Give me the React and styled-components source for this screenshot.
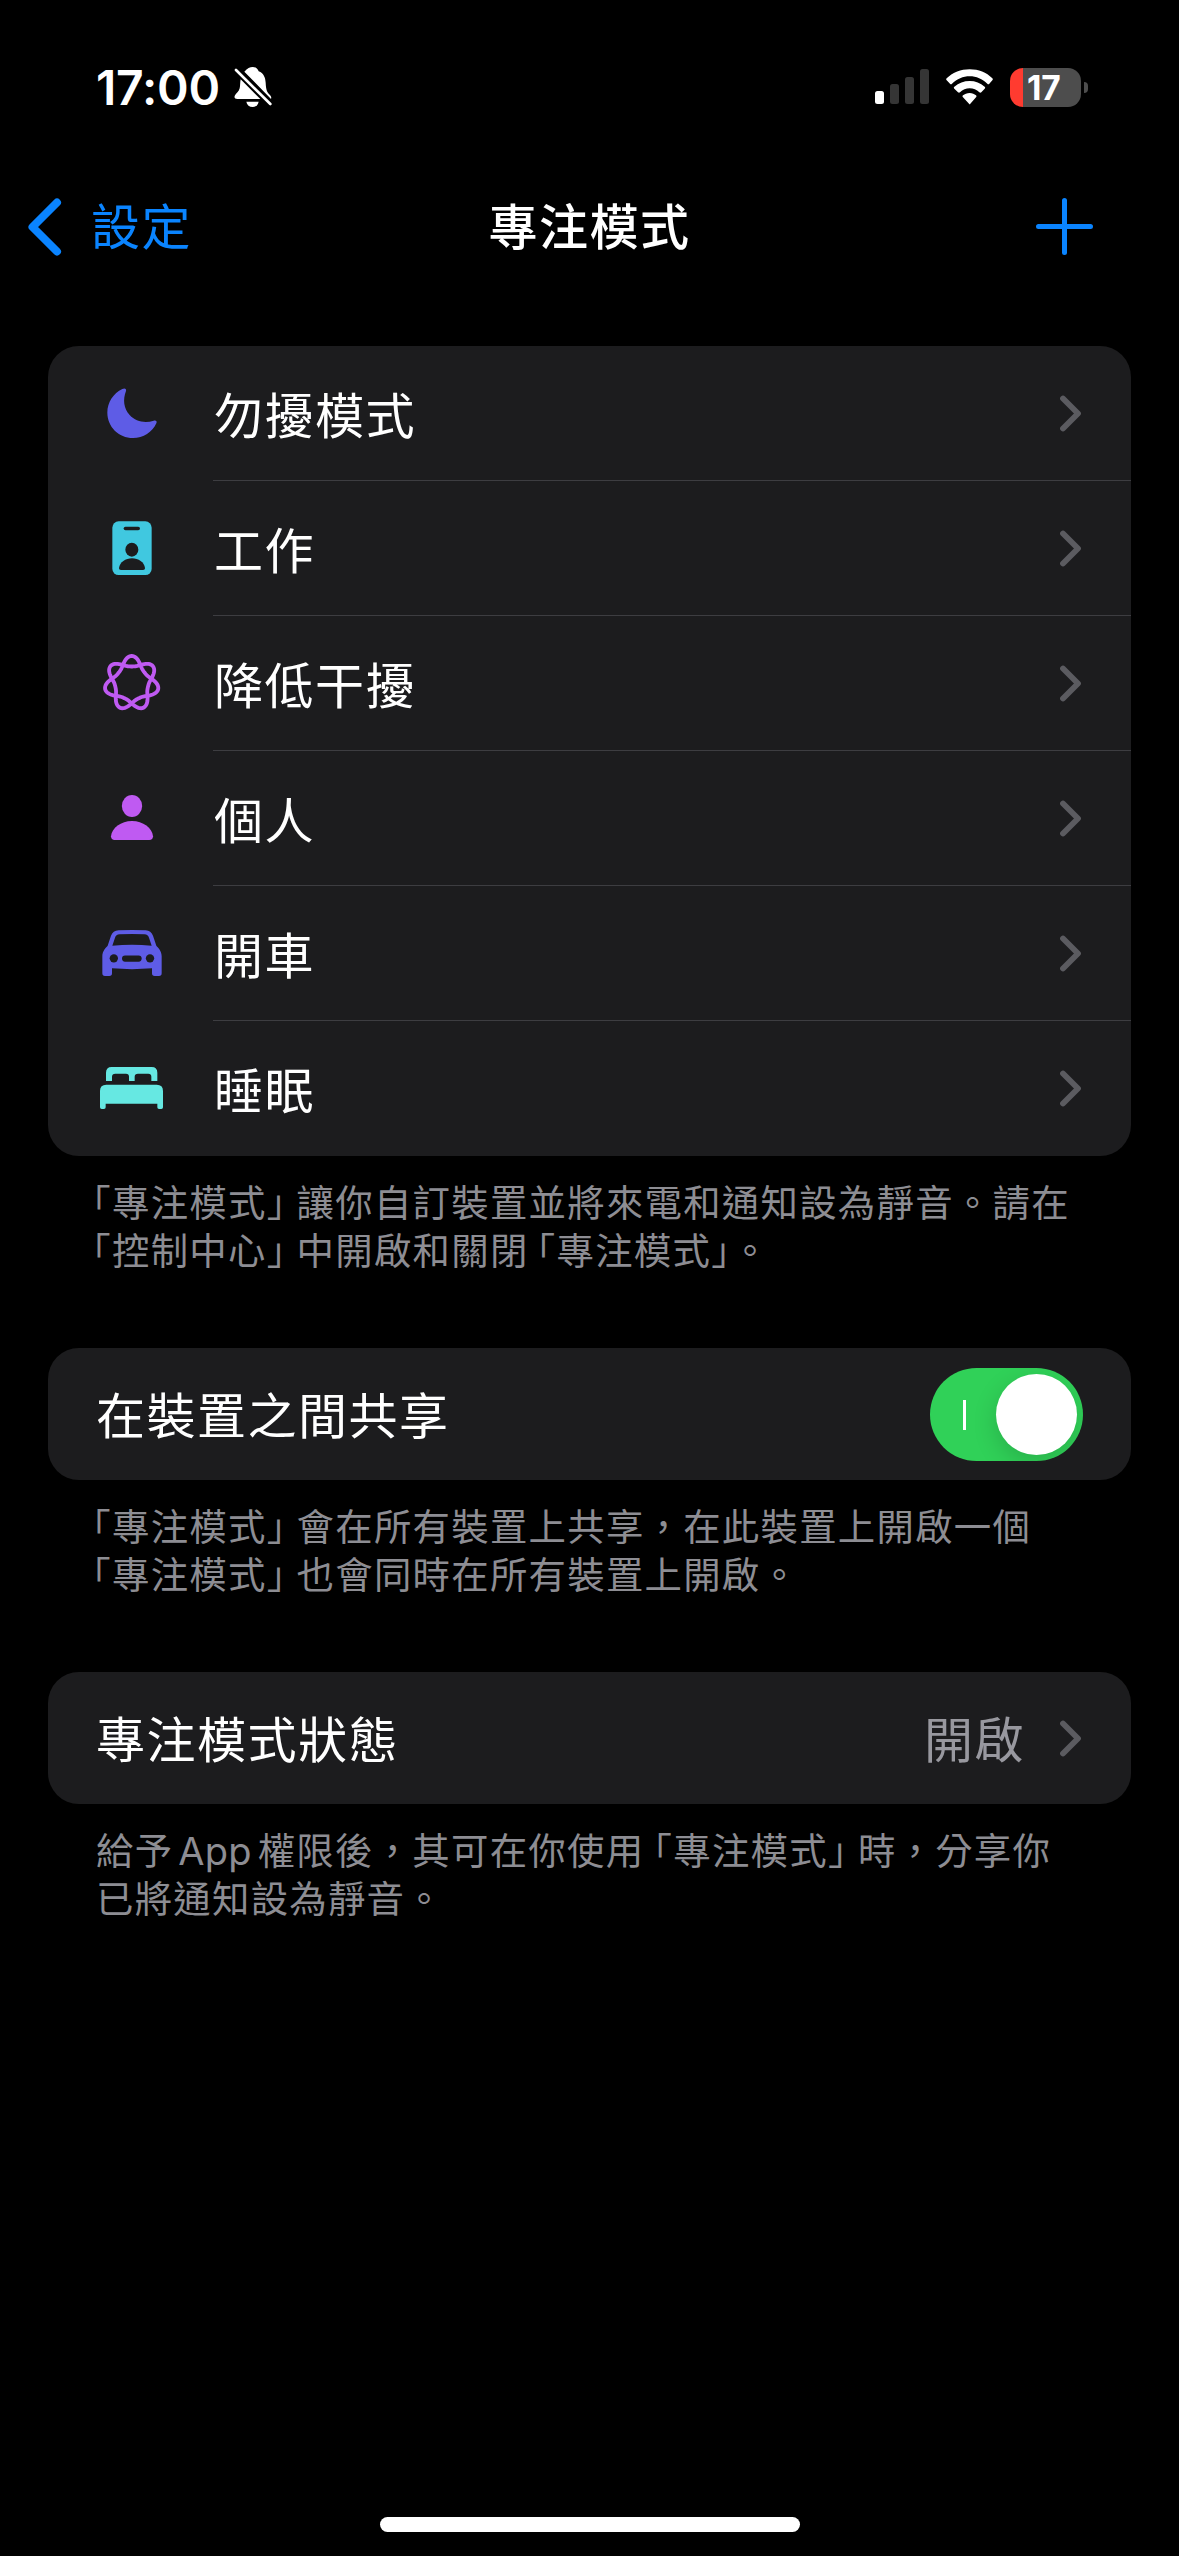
import React from "react";
import styled, { createGlobalStyle } from "styled-components";

const GlobalStyle = createGlobalStyle`
  * {
    box-sizing: border-box;
  }

  body {
    margin: 0;
    background: #000;
    font-family: Inter, "Noto Sans CJK TC", sans-serif;
    color: #fff;
  }
`

const Screen = styled.div`
  width: 1179px;
  height: 2556px;
  background: #000;
  display: flex;
  flex-direction: column;
  overflow: hidden;
`

const StatusBar = styled.header`
  height: 174px;
  padding: 0 91px 0 96px;
  display: flex;
  align-items: center;
  justify-content: space-between;
`

const StatusGroup = styled.div`
  display: flex;
  align-items: center;
`

const Clock = styled.span`
  width: 138px;
  padding-top: 2px;
  font-size: 48px;
  line-height: 60px;
  font-weight: 600;
  letter-spacing: -0.2px;
  white-space: nowrap;
`

const NavBar = styled.nav`
  height: 105px;
  padding: 0 86px 0 28px;
  display: grid;
  grid-template-columns: 1fr auto 1fr;
  align-items: center;
`

const BackButton = styled.div`
  margin-right: auto;
  display: flex;
  align-items: center;
  gap: 29px;
  color: #0a84ff;
`

const Label = styled.span`
  font-family: "Noto Sans CJK TC", sans-serif;
  font-size: 49px;
  line-height: 60px;
  letter-spacing: 1.5px;
  font-weight: ${(props) => props.$weight || 400};
  color: ${(props) => props.$color || "inherit"};
  padding-bottom: ${(props) => props.$lift || 0}px;
  white-space: nowrap;
`

const NavTitle = styled(Label)`
  margin-left: 58px;
`

const AddIcon = styled.svg`
  width: 57px;
  height: 57px;
  margin-left: auto;
`

const Content = styled.main`
  flex: 1;
  padding: 67px 48px 0;
`

const Card = styled.section`
  background: #1c1c1e;
  border-radius: 31px;
  overflow: hidden;
`

const ModeRow = styled.div`
  height: 135px;
  padding-left: 42px;
  display: grid;
  grid-template-columns: 123px 1fr;
  align-items: stretch;
`

const ModeIcon = styled.svg`
  width: 84px;
  height: 84px;
  margin-top: 25px;
  color: ${(props) => props.$color};
`

const ModeBody = styled.div`
  display: flex;
  align-items: center;
  justify-content: space-between;
  padding: 0 49px 0 1px;
  border-bottom: 1px solid #3d3d41;

  ${ModeRow}:last-child & {
    border-color: transparent;
  }
`

const SettingRow = styled.div`
  height: 132px;
  padding: 0 48px;
  display: flex;
  align-items: center;
  justify-content: space-between;
`

const RowValue = styled.div`
  display: flex;
  align-items: center;
  gap: 35px;
  margin-right: 1px;
  color: #98989f;
`

const ChevronIcon = styled.svg`
  width: 22px;
  height: 37px;
  display: block;
`

const Switch = styled.div`
  width: 153px;
  height: 93px;
  padding: 0 6px 0 33px;
  border-radius: 47px;
  background: #30d158;
  overflow: hidden;
  display: flex;
  align-items: center;
  justify-content: space-between;
`

const SwitchMark = styled.span`
  width: 3px;
  height: 30px;
  margin-top: 2px;
  background: #fff;
`

const SwitchKnob = styled.span`
  width: 81px;
  height: 81px;
  border-radius: 50%;
  background: #fff;
  box-shadow: 0 8px 24px rgba(0, 0, 0, 0.16);
`

const Footnote = styled.div`
  height: 192px;
  padding: 21px 47px 0 48px;
  color: #8d8d93;
  font-family: "Noto Sans CJK TC", sans-serif;
  font-size: 37.4px;
  letter-spacing: 1.27px;
`

const FootLine = styled.p`
  margin: 0 0 0 ${(props) => (props.$hang ? "-4px" : "0")};
  height: 48px;
  line-height: 48px;
  white-space: nowrap;
`

// half-width corner brackets
const Bracket = styled.span`
  font-feature-settings: "halt";
  margin-left: ${(props) => props.$before || 0}px;
  margin-right: ${(props) => props.$after || 0}px;
`

const Latin = styled.span`
  font-family: Inter, sans-serif;
  font-size: 38px;
  letter-spacing: 0.2px;
  margin: 0 6px 0 5px;
`

const HomeIndicator = styled.div`
  width: 420px;
  height: 15px;
  margin: 0 auto 24px;
  border-radius: 8px;
  background: #fff;
`

function BellOff() {
  return (
    <svg width="38" height="42" viewBox="700 82 114 126" fill="#fff">
      <path d="M731 99C740 89 748 85 756 85c9 0 15 5 18 13 15 6 20 18 21 34 1 22 4 28 12 36 4 4 6 8 4 13z" />
      <path d="M720 122c-2 9-1 19-3 27-2 10-11 15-14 21-4 7 0 11 7 11h69z" />
      <path d="M737 189h37c-2 10-9 16-18 16-10 0-17-6-19-16z" />
      <path d="M706 94 810 197" stroke="#000" strokeWidth="17" />
      <path d="M706 94 809 196" stroke="#fff" strokeWidth="8" strokeLinecap="round" />
    </svg>
  )
}

function Signal() {
  return (
    <svg width="54" height="36" viewBox="0 0 54 36" fill="#353535">
      <rect x="0" y="22" width="9" height="13" rx="2.5" fill="#fff" />
      <rect x="15" y="15" width="9" height="20" rx="2.5" />
      <rect x="30" y="8" width="9" height="27" rx="2.5" />
      <rect x="45" y="0" width="9" height="35" rx="2.5" />
    </svg>
  )
}

const WifiIcon = styled.svg`
  margin: 0 17px;
`

function Wifi() {
  return (
    <WifiIcon width="47" height="36" viewBox="438 89 141 108" fill="#fff">
      <path d="M509 90c27 0 50 9 68 27 2 2 2 4 0 6l-9 10c-2 2-4 2-6 0-15-14-33-22-53-22s-38 8-53 22c-2 2-4 2-6 0l-10-10c-2-2-2-4 0-6 19-18 42-27 69-27z" />
      <path d="M509 125c17 0 32 6 45 17 2 2 2 4 0 6l-10 11c-2 2-4 2-6 0-8-8-18-12-29-12s-21 4-29 12c-2 2-4 2-6 0l-11-11c-2-2-2-4 0-6 13-11 29-17 46-17z" />
      <path d="M509 161c8 0 14 3 19 7 2 2 2 4 0 6l-17 19c-1 2-3 2-4 0l-18-19c-2-2-2-4 0-6 5-4 12-7 20-7z" />
    </WifiIcon>
  )
}

const BatteryBody = styled.div`
  width: 71px;
  height: 39px;
  border-radius: 13px;
  background: linear-gradient(90deg, #ff3b30 13px, #4d4d4d 13px);
  display: flex;
  align-items: center;
  padding: 1px 0 0 17px;
  font-size: 33.5px;
  line-height: 38px;
  font-weight: 700;
  letter-spacing: -0.2px;
`

const BatteryCap = styled.div`
  width: 4px;
  height: 11px;
  margin-left: 3px;
  border-radius: 0 5px 5px 0;
  background: #4d4d4d;
`

function Chevron() {
  return (
    <ChevronIcon viewBox="0 0 22 37" fill="none">
      <path d="M3 3.5 18 18.5 3 33.5" stroke="#5b5b60" strokeWidth="5.8" strokeLinecap="round" strokeLinejoin="round" />
    </ChevronIcon>
  )
}

// seven lobes, drawn as one line that goes round twice
const lobes = Array.from({ length: 281 }, (_, i) => {
  const t = (i / 280) * Math.PI * 4
  const r = 63.2 + 15.7 * Math.cos(3.5 * t) + 2.6 * Math.cos(7 * t)
  return `${(275 + r * Math.sin(t)).toFixed(2)} ${(1029.5 - r * Math.cos(t)).toFixed(2)}`
}).join("L")

const modes = [
  {
    name: "勿擾模式",
    color: "#5e5ce6",
    view: "150 93 252 252",
    art: (
      <path d="M247 147C254 143 260 146 258 153C248 180 251 205 269 225C287 245 315 250 341 242C348 240 352 244 349 250C337 277 310 294 279 294C236 294 202 260 202 218C202 187 220 160 247 147Z" />
    ),
  },
  {
    name: "工作",
    color: "#40c8e0",
    view: "150 498 252 252",
    art: (
      <>
        <rect x="217" y="544" width="118" height="161" rx="19" />
        <g fill="#1c1c1e">
          <rect x="251" y="560" width="49" height="11" rx="5.5" />
          <ellipse cx="275.5" cy="629" rx="19.5" ry="21" />
          <path d="M237 684c2-17 20-29 39-29s37 12 39 29c0 4-2 6-6 6h-66c-4 0-6-2-6-6z" />
        </g>
      </>
    ),
  },
  {
    name: "降低干擾",
    color: "#bf5af2",
    view: "150 903 252 252",
    art: <path d={`M${lobes}Z`} fill="none" stroke="currentColor" strokeWidth="11.5" />,
  },
  {
    name: "個人",
    color: "#bf5af2",
    view: "150 108 252 252",
    art: (
      <>
        <ellipse cx="276" cy="198" rx="30.5" ry="33" />
        <path d="M213 289c2-25 30-46 63-46s61 21 63 46c0 7-4 11-11 11H224c-7 0-11-4-11-11z" />
      </>
    ),
  },
  {
    name: "開車",
    color: "#5e5ce6",
    view: "150 513 252 252",
    art: (
      <>
        <path
          fillRule="evenodd"
          d="M236 571Q276 569 317 571C328 572 335 577 339 587L349 617C353 622 365 632 365 649V700Q365 708 357 708H344Q336 708 336 700V685Q276 690 216 685V700Q216 708 208 708H195Q187 708 187 700V649C187 632 199 622 203 617L213 587C217 577 224 572 236 571ZM239 583C231 583 227 587 225 593L217 617Q276 611 335 617L327 593C325 587 321 583 313 583Q276 581 239 583Z"
        />
        <g fill="#1c1c1e">
          <circle cx="221.5" cy="655" r="12.5" />
          <circle cx="330" cy="655" r="12.5" />
          <rect x="246" y="646.5" width="59" height="18.5" rx="9.25" />
        </g>
      </>
    ),
  },
  {
    name: "睡眠",
    color: "#66e8e2",
    view: "150 918 252 252",
    art: (
      <>
        <path d="M198 1023V998Q198 981 215 981H335Q352 981 352 998V1023H334V1010Q334 1001 325 1001H294Q284 1001 284 1010V1023H267V1010Q267 1001 258 1001H226Q216 1001 216 1010V1023Z" />
        <path d="M180 1053Q180 1034 199 1034H350Q369 1034 369 1053V1102Q369 1107 364 1107H357Q352 1107 352 1102V1091H197V1102Q197 1107 192 1107H185Q180 1107 180 1102Z" />
      </>
    ),
  },
]

function App() {
  return (
    <Screen>
      <GlobalStyle />
      <StatusBar>
        <StatusGroup>
          <Clock>17:00</Clock>
          <BellOff />
        </StatusGroup>
        <StatusGroup>
          <Signal />
          <Wifi />
          <BatteryBody>17</BatteryBody>
          <BatteryCap />
        </StatusGroup>
      </StatusBar>

      <NavBar>
        <BackButton>
          <svg width="34" height="58" viewBox="0 0 34 58" fill="none">
            <path d="M29 4.500 4.500 29 29 53.500" stroke="currentColor" strokeWidth="8" strokeLinecap="round" strokeLinejoin="round" />
          </svg>
          <Label $lift={5}>設定</Label>
        </BackButton>
        <NavTitle $weight={500} $lift={5}>專注模式</NavTitle>
        <AddIcon viewBox="0 0 57 57">
          <path d="M28.500 2.500V54.500M2.500 28.500H54.500" stroke="#0a84ff" strokeWidth="5" strokeLinecap="round" />
        </AddIcon>
      </NavBar>

      <Content>
        <Card>
          {modes.map((mode) => (
            <ModeRow key={mode.name}>
              <ModeIcon viewBox={mode.view} fill="currentColor" $color={mode.color}>
                {mode.art}
              </ModeIcon>
              <ModeBody>
                <Label>{mode.name}</Label>
                <Chevron />
              </ModeBody>
            </ModeRow>
          ))}
        </Card>
        <Footnote>
          <FootLine $hang>
            <Bracket>「</Bracket>專注模式<Bracket $after={10}>」</Bracket>讓你自訂裝置並將來電和通知設為靜音。請在
          </FootLine>
          <FootLine $hang>
            <Bracket>「</Bracket>控制中心<Bracket $after={10}>」</Bracket>中開啟和關閉<Bracket $before={8}>「</Bracket>專注模式<Bracket>」</Bracket>。
          </FootLine>
        </Footnote>

        <Card>
          <SettingRow>
            <Label $lift={3}>在裝置之間共享</Label>
            <Switch>
              <SwitchMark />
              <SwitchKnob />
            </Switch>
          </SettingRow>
        </Card>
        <Footnote>
          <FootLine $hang>
            <Bracket>「</Bracket>專注模式<Bracket $after={10}>」</Bracket>會在所有裝置上共享，在此裝置上開啟一個
          </FootLine>
          <FootLine $hang>
            <Bracket>「</Bracket>專注模式<Bracket $after={10}>」</Bracket>也會同時在所有裝置上開啟。
          </FootLine>
        </Footnote>

        <Card>
          <SettingRow>
            <Label $lift={3}>專注模式狀態</Label>
            <RowValue>
              <Label $lift={3}>開啟</Label>
              <Chevron />
            </RowValue>
          </SettingRow>
        </Card>
        <Footnote>
          <FootLine>
            給予<Latin>App</Latin>權限後，其可在你使用<Bracket $before={9}>「</Bracket>專注模式<Bracket $after={10}>」</Bracket>時，分享你
          </FootLine>
          <FootLine>已將通知設為靜音。</FootLine>
        </Footnote>
      </Content>
      <HomeIndicator />
    </Screen>
  )
}

export default App
